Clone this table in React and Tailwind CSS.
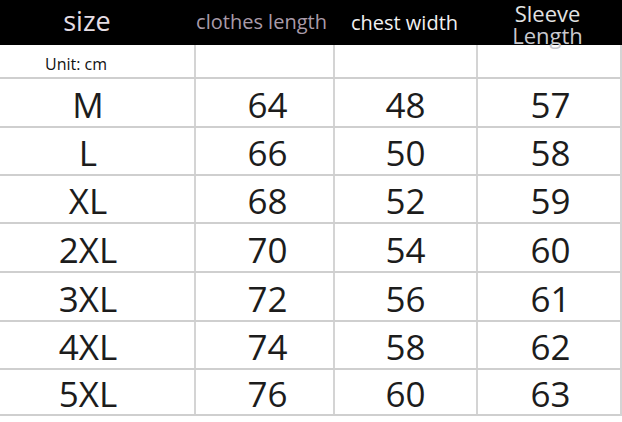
import React from 'react';

const rows = [
  ['M', 64, 48, 57, 'h-[49px]'],
  ['L', 66, 50, 58, 'h-[48px]'],
  ['XL', 68, 52, 59, 'h-[48px]'],
  ['2XL', 70, 54, 60, 'h-[49px]'],
  ['3XL', 72, 56, 61, 'h-[49px]'],
  ['4XL', 74, 58, 62, 'h-[48px]'],
  ['5XL', 76, 60, 63, 'h-[46px]'],
];

const cols = 'grid grid-cols-[194px_139px_143px_145px]';

export default function App() {
  return (
    <div className="w-[622px] h-[422px] bg-white overflow-hidden font-['Open_Sans',sans-serif]">
      <div className={`${cols} relative z-10 h-[45px] bg-black items-center`}>
        <div className="text-center pr-[20px] text-[27px] leading-none text-[#e4dde4] -mt-[4px]">size</div>
        <div className="text-center text-[20px] leading-none text-[#a99ba9] pr-[4px] -mt-[2px]">clothes length</div>
        <div className="text-center text-[20px] leading-none text-[#f2f2f2]">chest width</div>
        <div className="relative h-full">
          <div className="absolute left-0 right-0 top-[2px] text-center text-[22px] leading-[22px] text-[#e2e2e2] pr-[2px]">
            Sleeve
            <br />
            <span className="text-[#c9c9cf]">Length</span>
          </div>
        </div>
      </div>
      <div className="border-r-2 border-[#d4d4d4] w-[622px]">
        <div className={`${cols} h-[34px] border-b-2 border-[#cfcfcf]`}>
          <div className="pl-[45px] pt-[11px] text-[16px] leading-none text-[#111]">Unit: cm</div>
          <div className="border-l-2 border-[#d4d4d4]" />
          <div className="border-l-2 border-[#d4d4d4]" />
          <div className="border-l-2 border-[#d4d4d4]" />
        </div>
        {rows.map(([s, a, b, c, h]) => (
          <div key={s} className={`${cols} ${h} border-b-2 border-[#cfcfcf] text-[35px] leading-none text-[#1c1c1c]`}>
            <div className="flex items-center justify-center pr-[18px] pt-[3px]">{s}</div>
            <div className="flex items-center justify-center border-l-2 border-[#d4d4d4] pl-[6px] pt-[3px]">{a}</div>
            <div className="flex items-center justify-center border-l-2 border-[#d4d4d4] pt-[3px]">{b}</div>
            <div className="flex items-center justify-center border-l-2 border-[#d4d4d4] pl-[2px] pt-[3px]">{c}</div>
          </div>
        ))}
      </div>
    </div>
  );
}
